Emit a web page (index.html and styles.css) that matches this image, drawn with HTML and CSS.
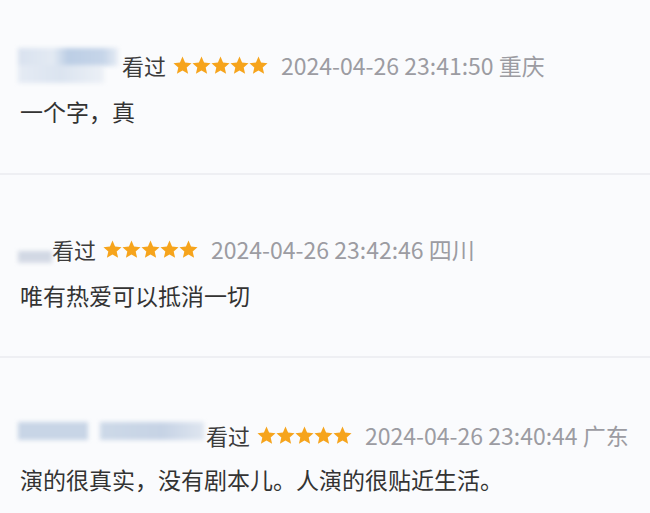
FILE: index.html
```html
<!DOCTYPE html>
<html lang="zh-CN">
<head>
  <meta charset="UTF-8">
  <meta name="viewport" content="width=device-width, initial-scale=1.0">
  <title>短评</title>
  <link rel="stylesheet" href="styles.css">
</head>
<body>
 <div class="list">

  <div class="item">
    <div class="head">
      <span class="name name-a"><i class="b1"></i><i class="b2"></i></span>
      <span class="seen">看过</span>
      <svg class="stars" viewBox="0 0 100 20" width="95" height="19">
        <g fill="#f6a41c">
          <polygon points="10,0.6 12.7,6.9 19.5,7.5 14.4,12 15.9,18.7 10,15.2 4.1,18.7 5.6,12 0.5,7.5 7.3,6.9"/>
          <polygon transform="translate(20 0)" points="10,0.6 12.7,6.9 19.5,7.5 14.4,12 15.9,18.7 10,15.2 4.1,18.7 5.6,12 0.5,7.5 7.3,6.9"/>
          <polygon transform="translate(40 0)" points="10,0.6 12.7,6.9 19.5,7.5 14.4,12 15.9,18.7 10,15.2 4.1,18.7 5.6,12 0.5,7.5 7.3,6.9"/>
          <polygon transform="translate(60 0)" points="10,0.6 12.7,6.9 19.5,7.5 14.4,12 15.9,18.7 10,15.2 4.1,18.7 5.6,12 0.5,7.5 7.3,6.9"/>
          <polygon transform="translate(80 0)" points="10,0.6 12.7,6.9 19.5,7.5 14.4,12 15.9,18.7 10,15.2 4.1,18.7 5.6,12 0.5,7.5 7.3,6.9"/>
        </g>
      </svg>
      <span class="time">2024-04-26 23:41:50 重庆</span>
    </div>
    <p class="text">一个字，真</p>
  </div>

  <div class="item">
    <div class="head">
      <span class="name name-b"></span>
      <span class="seen">看过</span>
      <svg class="stars" viewBox="0 0 100 20" width="95" height="19">
        <g fill="#f6a41c">
          <polygon points="10,0.6 12.7,6.9 19.5,7.5 14.4,12 15.9,18.7 10,15.2 4.1,18.7 5.6,12 0.5,7.5 7.3,6.9"/>
          <polygon transform="translate(20 0)" points="10,0.6 12.7,6.9 19.5,7.5 14.4,12 15.9,18.7 10,15.2 4.1,18.7 5.6,12 0.5,7.5 7.3,6.9"/>
          <polygon transform="translate(40 0)" points="10,0.6 12.7,6.9 19.5,7.5 14.4,12 15.9,18.7 10,15.2 4.1,18.7 5.6,12 0.5,7.5 7.3,6.9"/>
          <polygon transform="translate(60 0)" points="10,0.6 12.7,6.9 19.5,7.5 14.4,12 15.9,18.7 10,15.2 4.1,18.7 5.6,12 0.5,7.5 7.3,6.9"/>
          <polygon transform="translate(80 0)" points="10,0.6 12.7,6.9 19.5,7.5 14.4,12 15.9,18.7 10,15.2 4.1,18.7 5.6,12 0.5,7.5 7.3,6.9"/>
        </g>
      </svg>
      <span class="time">2024-04-26 23:42:46 四川</span>
    </div>
    <p class="text">唯有热爱可以抵消一切</p>
  </div>

  <div class="item">
    <div class="head">
      <span class="name name-c"><i class="c1"></i><i class="c2"></i></span>
      <span class="seen">看过</span>
      <svg class="stars" viewBox="0 0 100 20" width="95" height="19">
        <g fill="#f6a41c">
          <polygon points="10,0.6 12.7,6.9 19.5,7.5 14.4,12 15.9,18.7 10,15.2 4.1,18.7 5.6,12 0.5,7.5 7.3,6.9"/>
          <polygon transform="translate(20 0)" points="10,0.6 12.7,6.9 19.5,7.5 14.4,12 15.9,18.7 10,15.2 4.1,18.7 5.6,12 0.5,7.5 7.3,6.9"/>
          <polygon transform="translate(40 0)" points="10,0.6 12.7,6.9 19.5,7.5 14.4,12 15.9,18.7 10,15.2 4.1,18.7 5.6,12 0.5,7.5 7.3,6.9"/>
          <polygon transform="translate(60 0)" points="10,0.6 12.7,6.9 19.5,7.5 14.4,12 15.9,18.7 10,15.2 4.1,18.7 5.6,12 0.5,7.5 7.3,6.9"/>
          <polygon transform="translate(80 0)" points="10,0.6 12.7,6.9 19.5,7.5 14.4,12 15.9,18.7 10,15.2 4.1,18.7 5.6,12 0.5,7.5 7.3,6.9"/>
        </g>
      </svg>
      <span class="time">2024-04-26 23:40:44 广东</span>
    </div>
    <p class="text">演的很真实，没有剧本儿。人演的很贴近生活。</p>
  </div>

 </div>
</body>
</html>
```

FILE: styles.css
```css
body {
  margin: 0;
  padding: 0;
  background-color: #fafbfd;
  font-family: "Noto Sans CJK SC", "Noto Sans", sans-serif;
  color: #333;
  overflow: hidden;
}

.list {
  width: 650px;
}

.item {
  padding: 57px 20px 44px 18px;
  border-bottom: 2px solid #eeeff3;
}

.item:first-child {
  padding-top: 48px;
  padding-bottom: 45px;
}

.item:last-child {
  padding-top: 60px;
}

.item:last-child .text {
  margin-top: 10px;
}

.head {
  display: flex;
  align-items: center;
  height: 34px;
  font-size: 22px;
  line-height: 34px;
}

.seen {
  color: #3c3c3c;
  margin-right: 7px;
}

.stars {
  flex: none;
  margin-right: 13px;
}

.time {
  color: #9c9ca2;
  font-size: 23px;
  white-space: nowrap;
}

.text {
  margin: 12px 0 0 2px;
  font-size: 23px;
  line-height: 34px;
  color: #333;
}

/* blurred user names */
.name {
  position: relative;
  flex: none;
  height: 34px;
  filter: blur(2px);
}

.name i {
  position: absolute;
  display: block;
}

.name-a {
  width: 104px;
}

.name-a .b1 {
  left: 0;
  top: 0;
  width: 100px;
  height: 18px;
  background: linear-gradient(90deg, #d9e2ef, #e3eaf3 35%, #bccee5 50%, #c6d5e9 85%, #e6ecf4);
}

.name-a .b2 {
  left: 0;
  top: 17px;
  width: 86px;
  height: 18px;
  background: linear-gradient(90deg, #e5ebf4, #dbe4f0 50%, #ecf0f6);
}

.name-b {
  width: 34px;
  height: 34px;
  background: linear-gradient(180deg, transparent 55%, #cfd6e2 55%, #d5dbe6 90%, transparent 90%);
}

.name-c {
  width: 188px;
}

.name-c .c1 {
  left: 0;
  top: 4px;
  width: 70px;
  height: 18px;
  background: #c8d5e6;
}

.name-c .c2 {
  left: 82px;
  top: 4px;
  width: 104px;
  height: 18px;
  background: linear-gradient(90deg, #cdd9e8, #c6d3e5 60%, #dfe6f0);
}
```
